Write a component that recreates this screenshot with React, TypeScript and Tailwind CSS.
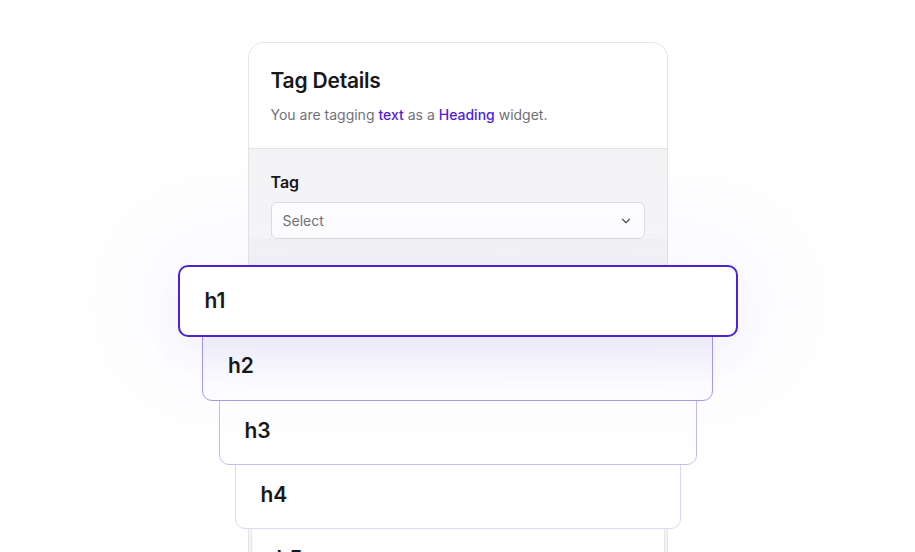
import { ChevronDown } from "lucide-react";

const items = [
  { label: "h1", w: "w-[560px]", h: "h-[72px]", cls: "border-2 border-[#4b23d1] rounded-[10px] z-50 shadow-[0_16px_36px_rgba(76,52,200,0.05),0_0_120px_50px_rgba(90,70,210,0.03)]" },
  { label: "h2", w: "w-[511px]", h: "h-[66px]", cls: "border-[1.5px] border-[#a99aeb] rounded-b-[10px] -mt-[2px] z-40 bg-gradient-to-b from-[#f7f6fc] to-white" },
  { label: "h3", w: "w-[478px]", h: "h-[65px]", cls: "border-[1.5px] border-[#c6bcf3] rounded-b-[10px] -mt-[1px] z-30" },
  { label: "h4", w: "w-[446px]", h: "h-[65px]", cls: "border-[1.5px] border-[#ddd7f8] rounded-b-[10px] -mt-[1px] z-20" },
  { label: "h5", w: "w-[414px]", h: "h-[65px]", cls: "border-[1.5px] border-[#e6e6ea] rounded-b-[10px] -mt-[1px] z-10" },
];

export default function App() {
  return (
    <div className="relative w-full h-[552px] bg-white overflow-hidden font-['Inter',sans-serif]">
      {/* Tag details card */}
      <div className="mx-auto mt-[42px] w-[420px] h-[560px] rounded-2xl border border-[#e4e4e7] bg-[#f4f4f5] overflow-hidden">
        <div className="bg-white px-[22px] pt-[24px] pb-[23px] border-b border-[#e4e4e7]">
          <h2 className="text-[21px] leading-[28px] font-semibold text-[#18181b] tracking-[-0.01em]">Tag Details</h2>
          <p className="mt-[10px] text-[14px] leading-[20px] text-[#71717a]">
            You are tagging <span className="text-[#4f22d6] font-medium">text</span> as a{" "}
            <span className="text-[#4f22d6] font-medium">Heading</span> widget.
          </p>
        </div>
        <div className="px-[22px] pt-[21px] bg-gradient-to-b from-[#f4f4f5] to-[#f7f7f9]">
          <label className="block text-[16px] leading-[24px] font-semibold text-[#18181b]">Tag</label>
          <div className="mt-[8px] h-[37px] rounded-md border border-[#dcdce0] bg-white flex items-center justify-between px-[11px]">
            <span className="text-[14px] text-[#71717a]">Select</span>
            <ChevronDown className="w-[14px] h-[14px] text-[#52525b]" strokeWidth={2} />
          </div>
        </div>
      </div>

      {/* Heading options */}
      <div className="absolute top-[265px] left-0 right-0 flex flex-col items-center">
        {items.map((it) => (
          <div
            key={it.label}
            className={`relative ${it.w} ${it.h} ${it.cls} pl-[25px] bg-white flex items-center`}
          >
            <span className={`text-[21px] font-semibold text-[#18181b] ${it.label === "h1" ? "" : "-mt-[4px]"}`}>{it.label}</span>
          </div>
        ))}
      </div>
    </div>
  );
}
